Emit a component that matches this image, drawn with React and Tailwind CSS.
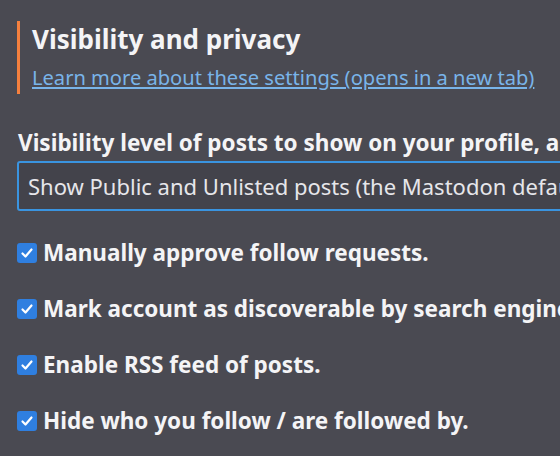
export default function App() {
  const items = [
    "Manually approve follow requests.",
    "Mark account as discoverable by search engines and other services.",
    "Enable RSS feed of posts.",
    "Hide who you follow / are followed by.",
  ];
  return (
    <div className="w-[560px] h-[456px] overflow-hidden bg-[#4a4a52] text-white" style={{ fontFamily: '"Noto Sans", "Open Sans", sans-serif' }}>
      <div className="pt-[21px] pl-[17px]">
        <div className="border-l-[3px] border-[#f5803e] pl-[12px] h-[73px] flex flex-col">
          <h2 className="pt-[2px] text-[26px] leading-[32px] font-bold text-[#f4f4f6] whitespace-nowrap">Visibility and privacy</h2>
          <a href="#" className="mt-[10px] text-[20.1px] leading-[26px] text-[#79b4e9] underline whitespace-nowrap">Learn more about these settings (opens in a new tab)</a>
        </div>
        <div className="mt-[34px] pl-[1px] text-[22.5px] leading-[30px] font-bold text-[#f4f4f6] whitespace-nowrap">Visibility level of posts to show on your profile, and in the feeds of other users</div>
        <div className="mt-[3px] h-[50px] w-[620px] border-2 border-[#3a94e0] rounded-[3px] bg-[#43434b] flex items-center pl-[9px] text-[22px] text-[#e6e6ea] whitespace-nowrap">Show Public and Unlisted posts (the Mastodon default)</div>
        <div className="mt-[28px] flex flex-col gap-[28px]">
          {items.map((t) => (
            <label key={t} className="flex items-center gap-[6px] whitespace-nowrap h-[28px]">
              <span className="w-[20px] h-[20px] rounded-[3px] bg-[#2f7fe0] flex items-center justify-center shrink-0">
                <svg width="14" height="14" viewBox="0 0 14 14" fill="none">
                  <path d="M2.5 7.5 L5.5 10.5 L11.5 3.5" stroke="white" strokeWidth="2.2" strokeLinecap="round" strokeLinejoin="round" />
                </svg>
              </span>
              <span className="text-[22.5px] font-bold text-[#f4f4f6] leading-[28px]">{t}</span>
            </label>
          ))}
        </div>
      </div>
    </div>
  );
}
